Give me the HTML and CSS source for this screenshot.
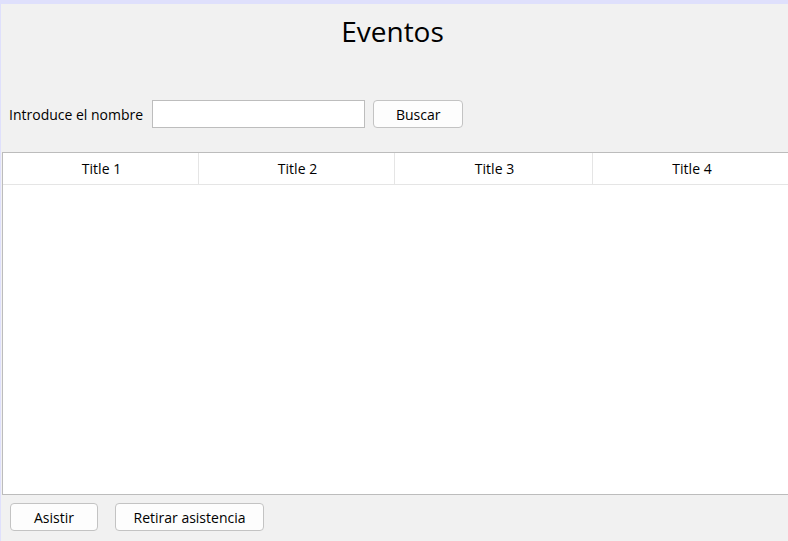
FILE: index.html
```
<!DOCTYPE html>
<html>
<head>
<meta charset="utf-8">
<link rel="stylesheet" href="styles.css">
</head>
<body>
<div class="window">
  <h1 class="title">Eventos</h1>
  <div class="search">
    <span class="label">Introduce el nombre</span>
    <input class="field" type="text">
    <button class="btn btn-search">Buscar</button>
  </div>
  <div class="table">
    <div class="thead">
      <div class="th">Title 1</div>
      <div class="th">Title 2</div>
      <div class="th">Title 3</div>
      <div class="th">Title 4</div>
    </div>
    <div class="tbody"></div>
  </div>
  <div class="actions">
    <button class="btn btn-assist">Asistir</button>
    <button class="btn btn-remove">Retirar asistencia</button>
  </div>
</div>
</body>
</html>
```
FILE: styles.css
```
html, body {
  margin: 0;
  padding: 0;
}
body {
  width: 788px;
  height: 541px;
  overflow: hidden;
  background: #f1f1f1;
  font-family: "Open Sans", "Noto Sans", sans-serif;
  color: #000;
}
.window {
  box-sizing: border-box;
  height: 541px;
  border-top: 4px solid #dfe0fc;
  border-left: 1px solid #dfe0fc;
  display: flex;
  flex-direction: column;
}
.title {
  margin: 0;
  padding-top: 8px;
  padding-right: 4px;
  height: 38px;
  line-height: 38px;
  font-size: 28px;
  font-weight: 400;
  text-align: center;
}
.search {
  display: flex;
  align-items: center;
  gap: 8px;
  margin-top: 50px;
  padding-left: 8px;
  height: 28px;
}
.label {
  font-size: 14px;
  margin-right: 1px;
}
.field {
  box-sizing: border-box;
  width: 213px;
  height: 28px;
  margin: 0;
  border: 1px solid #bdbdbd;
  background: #fff;
  padding: 0 4px;
  outline: none;
}
.btn {
  box-sizing: border-box;
  height: 28px;
  margin: 0;
  border: 1px solid #c3c3c3;
  border-radius: 4px;
  background: #fdfdfd;
  font-family: "Open Sans", "Noto Sans", sans-serif;
  font-size: 14px;
  color: #000;
  padding: 0;
}
.btn-search { width: 90px; }
.table {
  margin-top: 24px;
  margin-left: 1px;
  height: 343px;
  box-sizing: border-box;
  width: 800px;
  border: 1px solid #bcbcbc;
  background: #fff;
  display: flex;
  flex-direction: column;
}
.thead {
  display: grid;
  grid-template-columns: 196px 196px 198px 1fr;
  height: 31px;
  border-bottom: 1px solid #e5e5e5;
}
.th {
  display: flex;
  align-items: center;
  justify-content: center;
  font-size: 14px;
  border-right: 1px solid #e5e5e5;
  padding-left: 2px;
}
.th:last-child {
  border-right: none;
  padding-right: 12px;
}
.tbody { flex: 1; }
.actions {
  display: flex;
  gap: 17px;
  margin-top: 8px;
  padding-left: 9px;
}
.btn-assist { width: 88px; }
.btn-remove { width: 149px; }
```
